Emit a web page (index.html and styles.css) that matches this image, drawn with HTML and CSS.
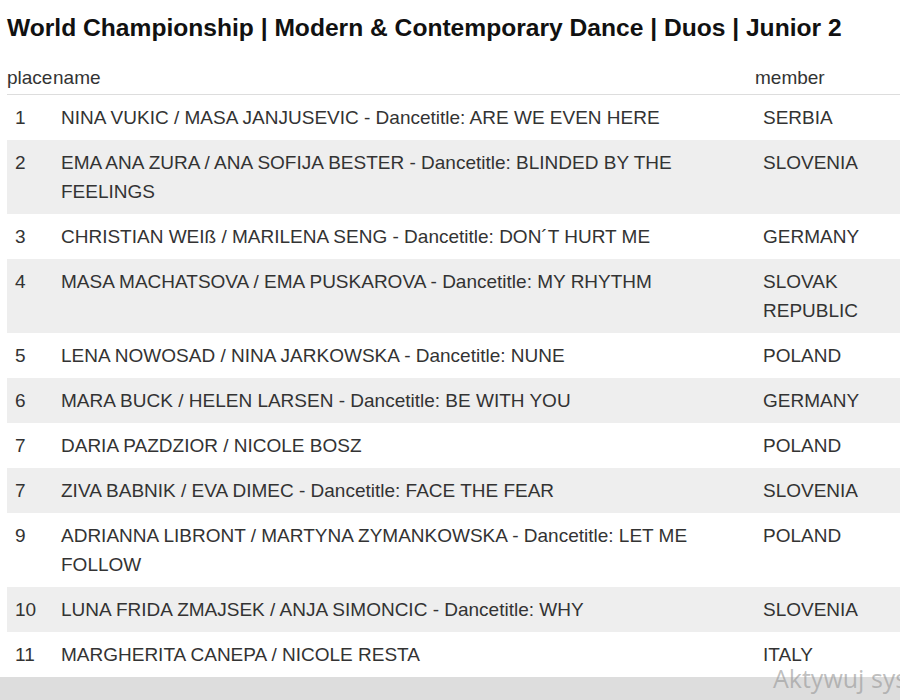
FILE: index.html
```html
<!DOCTYPE html>
<html>
<head>
<meta charset="utf-8">
<link rel="stylesheet" href="styles.css">
</head>
<body>
<div class="page">
  <h1 class="title">World Championship | Modern &amp; Contemporary Dance | Duos | Junior 2</h1>
  <table class="results">
    <thead>
      <tr><th class="c-place">place</th><th class="c-name">name</th><th class="c-member">member</th></tr>
    </thead>
    <tbody>
      <tr><td>1</td><td>NINA VUKIC / MASA JANJUSEVIC - Dancetitle: ARE WE EVEN HERE</td><td>SERBIA</td></tr>
      <tr><td>2</td><td>EMA ANA ZURA / ANA SOFIJA BESTER - Dancetitle: BLINDED BY THE FEELINGS</td><td>SLOVENIA</td></tr>
      <tr><td>3</td><td>CHRISTIAN WEIß / MARILENA SENG - Dancetitle: DON´T HURT ME</td><td>GERMANY</td></tr>
      <tr><td>4</td><td>MASA MACHATSOVA / EMA PUSKAROVA - Dancetitle: MY RHYTHM</td><td>SLOVAK REPUBLIC</td></tr>
      <tr><td>5</td><td>LENA NOWOSAD / NINA JARKOWSKA - Dancetitle: NUNE</td><td>POLAND</td></tr>
      <tr><td>6</td><td>MARA BUCK / HELEN LARSEN - Dancetitle: BE WITH YOU</td><td>GERMANY</td></tr>
      <tr><td>7</td><td>DARIA PAZDZIOR / NICOLE BOSZ</td><td>POLAND</td></tr>
      <tr><td>7</td><td>ZIVA BABNIK / EVA DIMEC - Dancetitle: FACE THE FEAR</td><td>SLOVENIA</td></tr>
      <tr><td>9</td><td>ADRIANNA LIBRONT / MARTYNA ZYMANKOWSKA - Dancetitle: LET ME FOLLOW</td><td>POLAND</td></tr>
      <tr><td>10</td><td>LUNA FRIDA ZMAJSEK / ANJA SIMONCIC - Dancetitle: WHY</td><td>SLOVENIA</td></tr>
      <tr><td>11</td><td>MARGHERITA CANEPA / NICOLE RESTA</td><td>ITALY</td></tr>
    </tbody>
  </table>
</div>
<div class="bottombar"></div>
<div class="watermark">Aktywuj system</div>
</body>
</html>
```

FILE: styles.css
```css
html, body {
  margin: 0;
  padding: 0;
  background: #fff;
  overflow: hidden;
  width: 900px;
  height: 700px;
}
body {
  font-family: "Liberation Sans", Arial, sans-serif;
  color: #333;
  position: relative;
}
.page {
  padding: 15px 0 0 7px;
}
.title {
  margin: 0;
  font-size: 24.6px;
  line-height: 26px;
  font-weight: bold;
  color: #111;
}
.results {
  margin-top: 27px;
  border-collapse: collapse;
  width: 905px;
  font-size: 19px;
  table-layout: fixed;
}
.results th {
  font-weight: normal;
  text-align: left;
  padding: 0 0 6px 0;
  line-height: 20px;
  border-bottom: 1px solid #ddd;
  color: #333;
}
.c-place { width: 46px; }
.c-name { width: 702px; }
.results td {
  padding: 8px 8px;
  line-height: 29px;
  vertical-align: top;
}
.results tbody tr:nth-child(even) {
  background: #eee;
}
.bottombar {
  position: absolute;
  left: 0;
  top: 677px;
  width: 900px;
  height: 23px;
  background: #ddd;
}
.watermark {
  position: absolute;
  left: 773px;
  top: 661px;
  font-family: "Open Sans", "Noto Sans", sans-serif;
  font-size: 25px;
  color: rgba(150, 150, 150, 0.6);
  white-space: nowrap;
}
```
